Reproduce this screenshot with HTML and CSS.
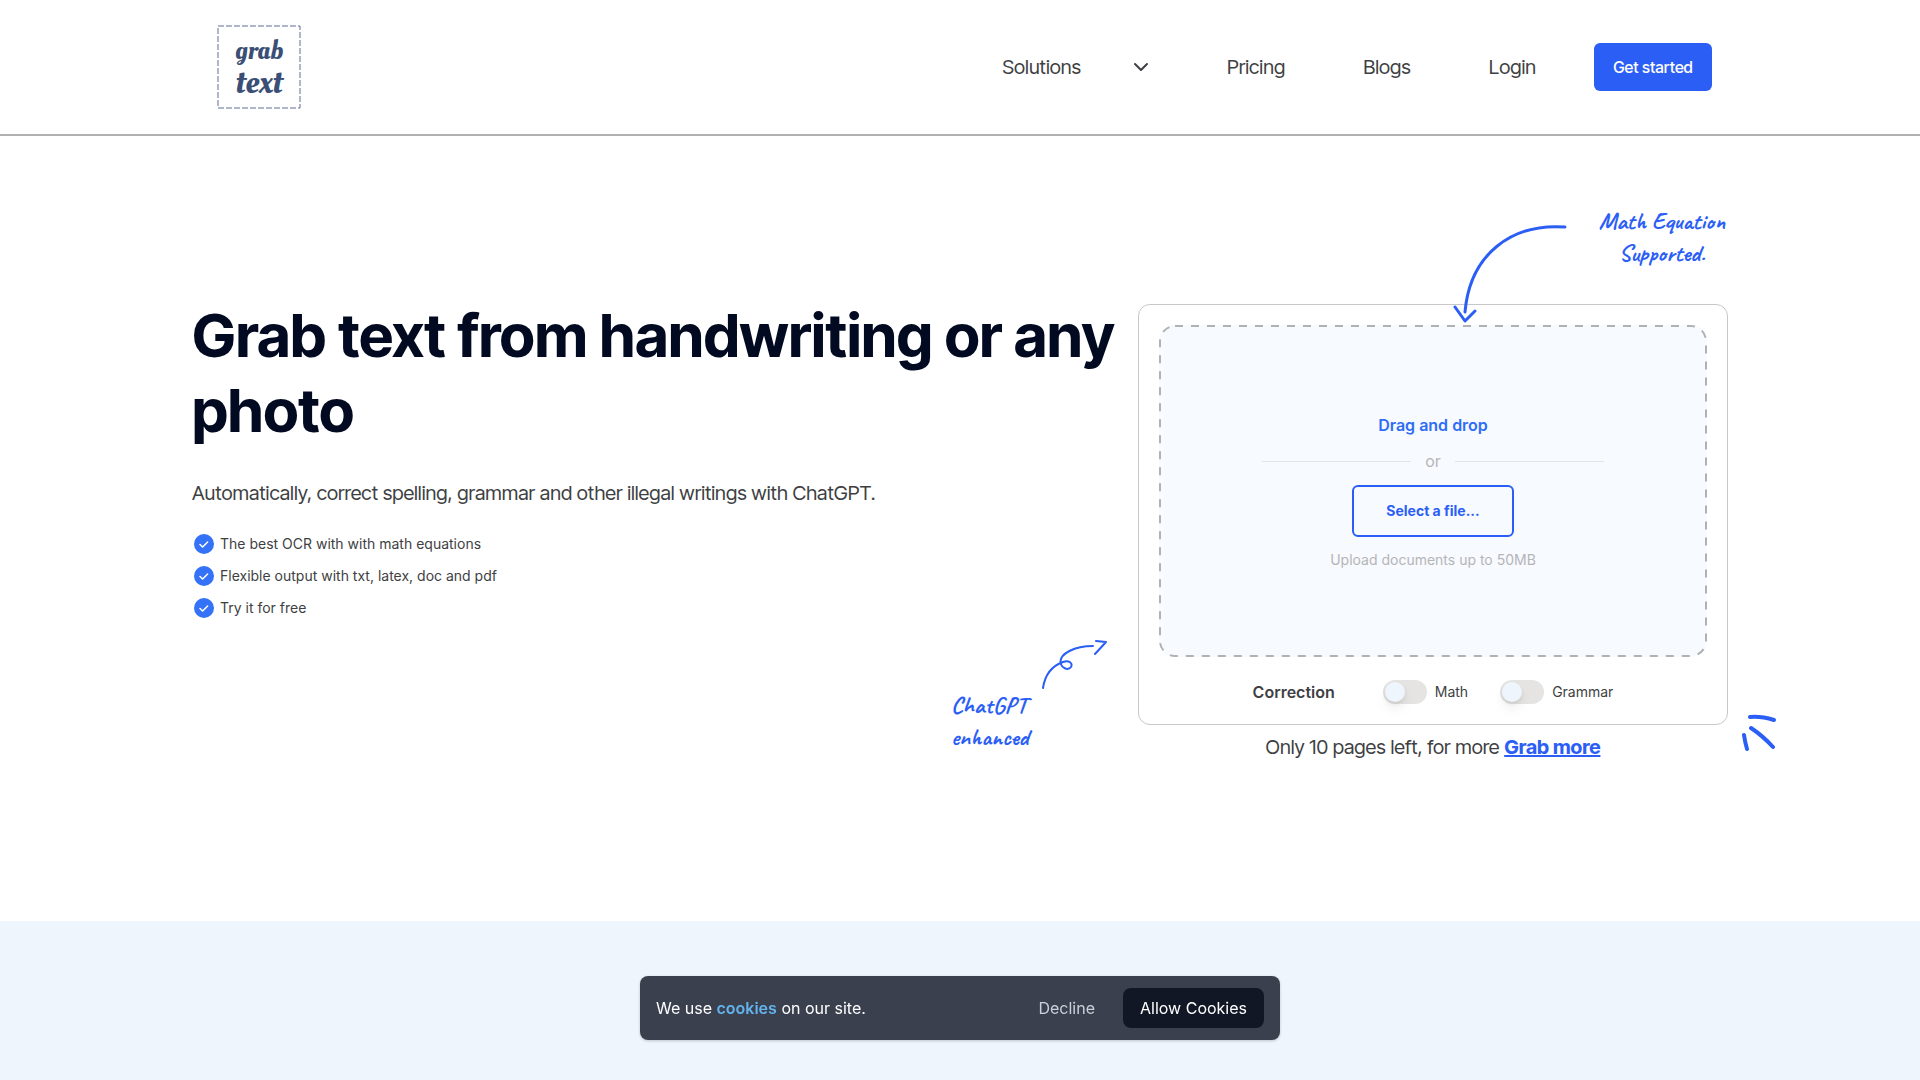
FILE: index.html
```html
<!DOCTYPE html>
<html lang="en">
<head>
<meta charset="utf-8">
<meta name="viewport" content="width=device-width, initial-scale=1">
<title>Grab Text</title>
<link rel="stylesheet" href="styles.css">
</head>
<body>
<header class="header">
  <a class="logo" href="#" aria-label="Grab text home">
    <svg width="84" height="84" viewBox="0 0 84 84">
      <rect class="logo-frame" x="1" y="1" width="82" height="82"/>
      <text class="logo-text logo-grab" x="42" y="34">grab</text>
      <text class="logo-text logo-word" x="42" y="68">text</text>
    </svg>
  </a>
  <nav class="nav">
    <button class="nav-menu" type="button">Solutions
      <svg width="16" height="10" viewBox="0 0 16 10"><path class="chevron" d="M2 2l6 6 6-6"/></svg>
    </button>
    <a class="nav-link" href="#">Pricing</a>
    <a class="nav-link" href="#">Blogs</a>
    <a class="nav-link" href="#">Login</a>
    <button class="start" type="button">Get started</button>
  </nav>
</header>

<main class="main">
  <section class="hero">
    <div class="intro">
      <h1 class="title">Grab text from handwriting or any photo</h1>
      <p class="lead">Automatically, correct spelling, grammar and other illegal writings with ChatGPT.</p>
      <ul class="features">
        <li class="feature"><svg width="20" height="20" viewBox="0 0 20 20"><circle class="tick-disc" cx="10" cy="10" r="10"/><path class="tick" d="M6 10.5l2.6 2.5 5-5"/></svg>The best OCR with with math equations</li>
        <li class="feature"><svg width="20" height="20" viewBox="0 0 20 20"><circle class="tick-disc" cx="10" cy="10" r="10"/><path class="tick" d="M6 10.5l2.6 2.5 5-5"/></svg>Flexible output with txt, latex, doc and pdf</li>
        <li class="feature"><svg width="20" height="20" viewBox="0 0 20 20"><circle class="tick-disc" cx="10" cy="10" r="10"/><path class="tick" d="M6 10.5l2.6 2.5 5-5"/></svg>Try it for free</li>
      </ul>
    </div>

    <div class="upload">
      <div class="card">
        <div class="dropzone">
          <svg class="dash" aria-hidden="true"><rect class="dash-line" x="1" y="1" rx="15"/></svg>
          <p class="drop-title">Drag and drop</p>
          <div class="divider"><span class="or">or</span></div>
          <button class="select" type="button">Select a file...</button>
          <p class="limit">Upload documents up to 50MB</p>
        </div>
        <div class="options">
          <strong class="options-title">Correction</strong>
          <label class="option"><input class="switch" type="checkbox">Math</label>
          <label class="option"><input class="switch" type="checkbox">Grammar</label>
        </div>
      </div>
      <p class="quota">Only 10 pages left, for more <a class="more" href="#">Grab more</a></p>

      <p class="note note-math">Math Equation<br>Supported.</p>
      <svg class="sketch sketch-math" width="118" height="102" viewBox="0 0 118 102"><path class="stroke-3" d="M113 5C60 1 18 32 13 90M3 85l10 14 10-10"/></svg>
      <p class="note note-gpt">ChatGPT<br>enhanced</p>
      <svg class="sketch sketch-gpt" width="68" height="52" viewBox="0 0 68 52"><path class="stroke-2" d="M3 48C5 34 12 26 23 22C29 20 33 23 31 27C28 31 21 28 20.500 22C20 14 34 6 53 6M56 1l10 1-11 12"/></svg>
      <svg class="sketch sketch-spark" width="38" height="38" viewBox="0 0 38 38"><path class="stroke-4" d="M10 3Q21 2 34 6M11 14Q23 22 33 33M4 21Q5 28 7 35"/></svg>
    </div>
  </section>
  <section class="band"></section>
</main>

<aside class="cookies" aria-label="Cookie consent">
  <p class="cookies-text">We use <a class="cookies-link" href="#">cookies</a> on our site.</p>
  <button class="decline" type="button">Decline</button>
  <button class="allow" type="button">Allow Cookies</button>
</aside>
</body>
</html>
```
FILE: styles.css
```css
* {
  box-sizing: border-box;
}

body {
  display: flex;
  flex-direction: column;
  min-height: 100vh;
  margin: 0;
  background: #fff;
  color: #3e3f43;
  font-family: Inter, "Liberation Sans", sans-serif;
  font-size: 16px;
  line-height: 24px;
}

h1, p, ul {
  margin: 0;
  padding: 0;
}

button {
  border: 0;
  padding: 0;
  background: none;
  color: inherit;
  font: inherit;
  cursor: pointer;
}

a {
  color: inherit;
  text-decoration: none;
}

svg {
  display: block;
  flex: none;
  fill: none;
  stroke-linecap: round;
  stroke-linejoin: round;
}

.nav,
.title,
.lead,
.quota {
  font-family: "Inter Tight", Inter, "Liberation Sans", sans-serif;
}

/* Header */

.header {
  display: flex;
  align-items: center;
  justify-content: space-between;
  padding: 25px 208px;
  border-bottom: 2px solid #b1b1b3;
}

.logo {
  margin-left: 9px;
}

.logo-frame {
  stroke: #5f7196;
  stroke-width: 1;
  stroke-dasharray: 6 2;
  stroke-linecap: butt;
}

.logo-text {
  fill: #3b4f76;
  font-family: "Oleo Script", "Liberation Serif", serif;
  text-anchor: middle;
}

.logo-grab {
  font-size: 27px;
}

.logo-word {
  font-size: 34px;
}

.nav {
  display: flex;
  align-items: center;
  gap: 78px;
  font-size: 20px;
}

.nav-menu {
  display: flex;
  align-items: center;
  gap: 52px;
}

.chevron {
  stroke: #3e3f43;
  stroke-width: 2;
}

.start {
  width: 118px;
  height: 48px;
  margin-left: -20px;
  border-radius: 6px;
  background: #2b5ef5;
  color: #fff;
  font-size: 16px;
  font-weight: 500;
}

/* Hero */

.main {
  display: flex;
  flex: 1;
  flex-direction: column;
}

.hero {
  display: grid;
  grid-template-columns: minmax(0, 1fr) 590px;
  padding: 162px 192px 159px;
}

.title {
  color: #010a21;
  font-size: 60px;
  font-weight: 700;
  line-height: 75px;
}

.lead {
  margin-top: 30px;
  font-size: 20px;
  line-height: 30px;
}

.features {
  margin-top: 20px;
  list-style: none;
}

.feature {
  display: flex;
  align-items: center;
  gap: 6px;
  height: 32px;
  padding-left: 2px;
  font-size: 14px;
}

.tick-disc {
  fill: #3472f7;
}

.tick {
  stroke: #fff;
  stroke-width: 1.5;
}

/* Upload card */

.upload {
  position: relative;
  margin-top: 6px;
}

.card {
  padding: 20px;
  border: 1px solid #c8c8ca;
  border-radius: 12px;
}

.dropzone {
  position: relative;
  display: flex;
  flex-direction: column;
  align-items: center;
  height: 332px;
  padding-top: 88px;
  border-radius: 16px;
  background: #f7faff;
}

.dash {
  position: absolute;
  inset: 0;
  width: 100%;
  height: 100%;
}

.dash-line {
  width: calc(100% - 2px);
  height: calc(100% - 2px);
  stroke: #b1b1b3;
  stroke-width: 2;
  stroke-dasharray: 8 8;
  stroke-linecap: butt;
}

.drop-title {
  color: #2e6df6;
  font-weight: 600;
}

.divider {
  display: flex;
  align-items: center;
  gap: 14px;
  width: 342px;
  margin-top: 12px;
  color: #b5b5b7;
}

.divider::before,
.divider::after {
  content: "";
  flex: 1;
  height: 1px;
  background: #e1e5ea;
}

.select {
  position: relative;
  width: 162px;
  height: 52px;
  margin-top: 12px;
  border: 2px solid #2b5ef5;
  border-radius: 6px;
  color: #2b5ef5;
  font-size: 14px;
  font-weight: 700;
}

.limit {
  margin-top: 11px;
  color: #b5b5b7;
  font-size: 14px;
}

.options {
  display: flex;
  align-items: center;
  justify-content: center;
  gap: 32px;
  padding-top: 23px;
}

.options-title {
  margin-right: 16px;
  font-weight: 600;
}

.option {
  display: flex;
  align-items: center;
  gap: 8px;
  font-size: 14px;
}

.switch {
  appearance: none;
  width: 44px;
  height: 24px;
  margin: 0;
  padding: 2px;
  border-radius: 12px;
  background: #e5e4e3;
}

.switch::before {
  content: "";
  display: block;
  width: 20px;
  height: 20px;
  border-radius: 10px;
  background: #eef5fd;
  box-shadow: 0 8px 12px rgba(0, 0, 0, .06), 0 2px 4px rgba(0, 0, 0, .08);
}

.switch:checked::before {
  margin-left: 20px;
}

.quota {
  margin-top: 7px;
  font-size: 20px;
  line-height: 30px;
  text-align: center;
}

.more {
  color: #2b5ef5;
  font-weight: 700;
  text-decoration: underline;
}

/* Handwritten notes around the card */

.note {
  position: absolute;
  color: #2b5ef5;
  font-family: Caveat, Lato, sans-serif;
  font-size: 24px;
  font-weight: 700;
  line-height: 32px;
  white-space: nowrap;
}

.note-math {
  top: -99px;
  right: 3px;
  text-align: center;
}

.note-gpt {
  top: 385px;
  left: -187px;
}

.sketch {
  position: absolute;
  stroke: #2b5ef5;
}

.sketch-math {
  top: -82px;
  left: 314px;
}

.sketch-gpt {
  top: 336px;
  left: -98px;
}

.sketch-spark {
  top: 410px;
  left: 602px;
}

.stroke-2 {
  stroke-width: 2;
}

.stroke-3 {
  stroke-width: 3;
}

.stroke-4 {
  stroke-width: 4;
}

.band {
  flex: 1;
  min-height: 159px;
  background: #eef5fd;
}

/* Cookie bar */

.cookies {
  position: fixed;
  bottom: 40px;
  left: 50%;
  display: flex;
  align-items: center;
  width: 640px;
  max-width: 100%;
  height: 64px;
  padding: 0 16px;
  border-radius: 8px;
  background: #3b404f;
  box-shadow: 0 1px 3px rgba(0, 0, 0, .2);
  color: #fff;
  transform: translateX(-50%);
}

.cookies-text {
  flex: 1;
}

.cookies-link {
  color: #63b3ed;
  font-weight: 600;
}

.decline {
  margin-right: 28px;
  color: #cbd0d8;
}

.allow {
  width: 141px;
  height: 40px;
  border-radius: 8px;
  background: #111725;
}
```
